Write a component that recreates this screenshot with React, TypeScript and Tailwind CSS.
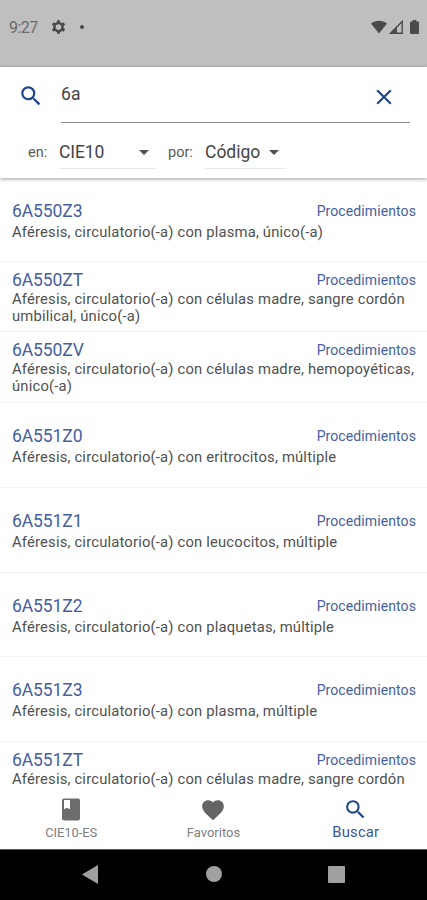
import React from "react";
import { MdSearch, MdClose, MdArrowDropDown, MdFavorite } from "react-icons/md";
import clsx from "clsx";

const results = [
  { code: "6A550Z3", text: ["Aféresis, circulatorio(-a) con plasma, único(-a)"], height: "h-[84px]" },
  { code: "6A550ZT", text: ["Aféresis, circulatorio(-a) con células madre, sangre cordón", "umbilical, único(-a)"], height: "h-[70px]" },
  { code: "6A550ZV", text: ["Aféresis, circulatorio(-a) con células madre, hemopoyéticas,", "único(-a)"], height: "h-[71px]" },
  { code: "6A551Z0", text: ["Aféresis, circulatorio(-a) con eritrocitos, múltiple"], height: "h-[85px]" },
  { code: "6A551Z1", text: ["Aféresis, circulatorio(-a) con leucocitos, múltiple"], height: "h-[85px]" },
  { code: "6A551Z2", text: ["Aféresis, circulatorio(-a) con plaquetas, múltiple"], height: "h-[84px]" },
  { code: "6A551Z3", text: ["Aféresis, circulatorio(-a) con plasma, múltiple"], height: "h-[85px]" },
  { code: "6A551ZT", text: ["Aféresis, circulatorio(-a) con células madre, sangre cordón"], height: "h-[71px]", compact: true },
];

const StatusBar = () => (
  <div className="flex h-[67px] shrink-0 items-start justify-between bg-[#bfbfbf] pl-[9px] pr-[8px] pt-[19px] text-[#4a4a4a]">
    <div className="flex h-4 items-center">
      <span className="w-[42px] pt-px text-[16px] leading-4 tracking-[-0.5px] text-[#6a6a6a]">9:27</span>
      <svg width="15" height="16" viewBox="-8 -8 16 16" fill="none" stroke="currentColor">
        <circle r="4.300" strokeWidth="2.600" />
        <path
          d="M0-7.300v2.500M0 7.300V4.800M-6.300-3.650l2.100 1.250M6.300 3.650L4.200 2.400M-6.300 3.650l2.100-1.250M6.300-3.650L4.200-2.400"
          strokeWidth="3.200"
        />
      </svg>
      <span className="ml-[14px] h-[4px] w-[4px] rounded-full bg-[#4a4a4a]" />
    </div>
    <div className="flex h-4 items-center">
      <svg width="16" height="14" viewBox="0 0 16 14" fill="currentColor">
        <path d="M0 3.5C4.5-.2 11.5-.2 16 3.5L8 13.5z" />
      </svg>
      <svg className="ml-[2px]" width="14" height="14" viewBox="0 0 14 14">
        <path d="M1.500 13.200L13.200 1.500v11.700z" fill="none" stroke="currentColor" strokeWidth="1.400" />
        <path d="M1.500 13.200L8 6.600v6.600z" fill="currentColor" />
      </svg>
      <svg className="ml-[7px]" width="9" height="14" viewBox="0 0 9 14" fill="currentColor">
        <path d="M2.7 0h3.6v1.4H8q1 0 1 1V13q0 1-1 1H1q-1 0-1-1V2.4q0-1 1-1h1.700z" />
      </svg>
    </div>
  </div>
);

const SearchHeader = () => (
  <header className="relative z-10 h-[111px] shrink-0 bg-white text-[#444444] shadow-[0_1px_4px_rgba(0,0,0,0.4)]">
    <div className="flex h-14 pl-[18px] pr-[17px]">
      <MdSearch size={26} className="mr-[17px] mt-[16px] text-[#1f4489]" />
      <div className="flex flex-1 justify-between border-b border-[#8a8a8a]">
        <span className="pt-[15px] text-[17.500px] leading-6 tracking-[0.2px]">6a</span>
        <MdClose size={26} className="mr-[13px] mt-[17px] text-[#1f4489]" />
      </div>
    </div>
    <div className="flex pl-[28px] pt-[12px]">
      <span className="w-[31px] pt-[8px] text-[14.500px] leading-5 text-[#5a5a5a]">en:</span>
      <div className="flex h-[34px] w-[97px] items-center justify-between border-b border-[#e8e8e8]">
        <span className="pt-px text-[17.500px] tracking-[-0.1px]">CIE10</span>
        <MdArrowDropDown size={24} className="text-[#505050]" />
      </div>
      <span className="ml-[12px] w-[37px] pt-[8px] text-[14.500px] leading-5 text-[#5a5a5a]">por:</span>
      <div className="flex h-[34px] w-[81px] items-center justify-between border-b border-[#e8e8e8]">
        <span className="pt-px text-[17.500px]">Código</span>
        <MdArrowDropDown size={24} className="text-[#505050]" />
      </div>
    </div>
  </header>
);

const ResultList = () => (
  <main className="min-h-0 flex-1 overflow-hidden bg-white">
    {results.map((item) => {
      const tight = item.compact || item.text.length > 1;
      return (
        <div
          key={item.code}
          className={clsx("border-b border-[#f3f3f3] pl-[12px] pr-[11px]", item.height, tight ? "pt-[8px]" : "pt-[23px]")}
        >
          <div className="flex h-5 items-center justify-between text-[#4560a0]">
            <span className="text-[17.500px] tracking-[-0.1px]">{item.code}</span>
            <span className="text-[14px] leading-5 tracking-[0.1px]">Procedimientos</span>
          </div>
          <p
            className={clsx(
              "whitespace-nowrap text-[14.800px] leading-[17px] tracking-[0.18px] text-[#505050]",
              tight ? "mt-px" : "mt-[3px]"
            )}
          >
            {item.text.map((line) => (
              <span key={line} className="block">
                {line}
              </span>
            ))}
          </p>
        </div>
      );
    })}
  </main>
);

const TabBar = () => (
  <nav className="z-10 grid h-[61px] shrink-0 grid-cols-3 bg-white text-[#808080]">
    <div className="flex flex-col items-center pt-[10px]">
      <svg width="18" height="23" viewBox="0 0 18 23">
        <rect width="18" height="22" y=".5" rx="2" fill="#6c6c6c" />
        <path d="M2 2h6v9.300L5 9.800 2 11.300z" fill="white" />
      </svg>
      <span className="mt-[4px] text-[13px] leading-4 tracking-[-0.1px]">CIE10-ES</span>
    </div>
    <div className="flex flex-col items-center pt-[9px]">
      <MdFavorite size={26} className="text-[#646464]" />
      <span className="mt-[2px] text-[13px] leading-4">Favoritos</span>
    </div>
    <div className="flex flex-col items-center pt-[9px] text-[#1f4489]">
      <MdSearch size={25} />
      <span className="mt-[2px] text-[14.800px] leading-4 tracking-[0.2px] text-[#3a5596]">Buscar</span>
    </div>
  </nav>
);

const SystemNav = () => (
  <div className="flex h-[51px] shrink-0 items-center border-t border-[#555555] bg-black pb-[2px] pl-[82px]">
    <svg width="16" height="19" viewBox="0 0 16 19" fill="#a0a0a0">
      <path d="M16 0v19L0 9.500z" />
    </svg>
    <span className="ml-[108px] h-[16px] w-[16px] rounded-full bg-[#a0a0a0]" />
    <span className="ml-[106px] h-[17px] w-[17px] rounded-[1px] bg-[#a0a0a0]" />
  </div>
);

export default function App() {
  return (
    <div className="flex h-screen w-full flex-col overflow-hidden bg-white font-['Roboto',sans-serif]">
      <StatusBar />
      <SearchHeader />
      <ResultList />
      <TabBar />
      <SystemNav />
    </div>
  );
}
